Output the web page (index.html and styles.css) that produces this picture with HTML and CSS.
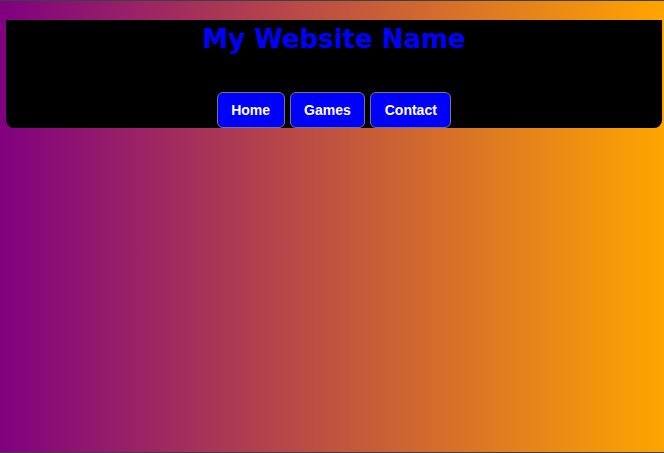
FILE: index.html
```html
<!DOCTYPE html>
<html>
<head>
<meta charset="utf-8">
<link rel="stylesheet" href="styles.css">
</head>
<body>
<header class="site-header">
  <h1 class="site-title">My Website Name</h1>
  <nav class="nav">
    <a class="nav-btn" href="#">Home</a>
    <a class="nav-btn" href="#">Games</a>
    <a class="nav-btn" href="#">Contact</a>
  </nav>
</header>
</body>
</html>
```

FILE: styles.css
```css
html, body {
  margin: 0;
  padding: 0;
}
body {
  box-sizing: border-box;
  min-height: 100vh;
  border-top: 1px solid #3a4045;
  border-bottom: 1px solid #3a4045;
  background: linear-gradient(to right, #800080, #ffa500);
  padding: 19px 2px 0 6px;
}
.site-header {
  background: #000;
  border-radius: 0 0 8px 8px;
  display: flex;
  flex-direction: column;
  align-items: center;
  padding-top: 4px;
}
.site-title {
  margin: 0;
  color: #0000ff;
  font-family: "DejaVu Sans", Verdana, sans-serif;
  font-weight: bold;
  font-size: 26px;
  line-height: 30px;
}
.nav {
  display: flex;
  gap: 5px;
  margin-top: 38px;
}
.nav-btn {
  display: block;
  background: #0000ff;
  color: #fff;
  text-decoration: none;
  font-family: "Liberation Sans", Arial, sans-serif;
  font-weight: bold;
  font-size: 14px;
  line-height: 13px;
  padding: 11px 13.5px 10px;
  border: 1px solid #777;
  border-radius: 6px;
}
```
